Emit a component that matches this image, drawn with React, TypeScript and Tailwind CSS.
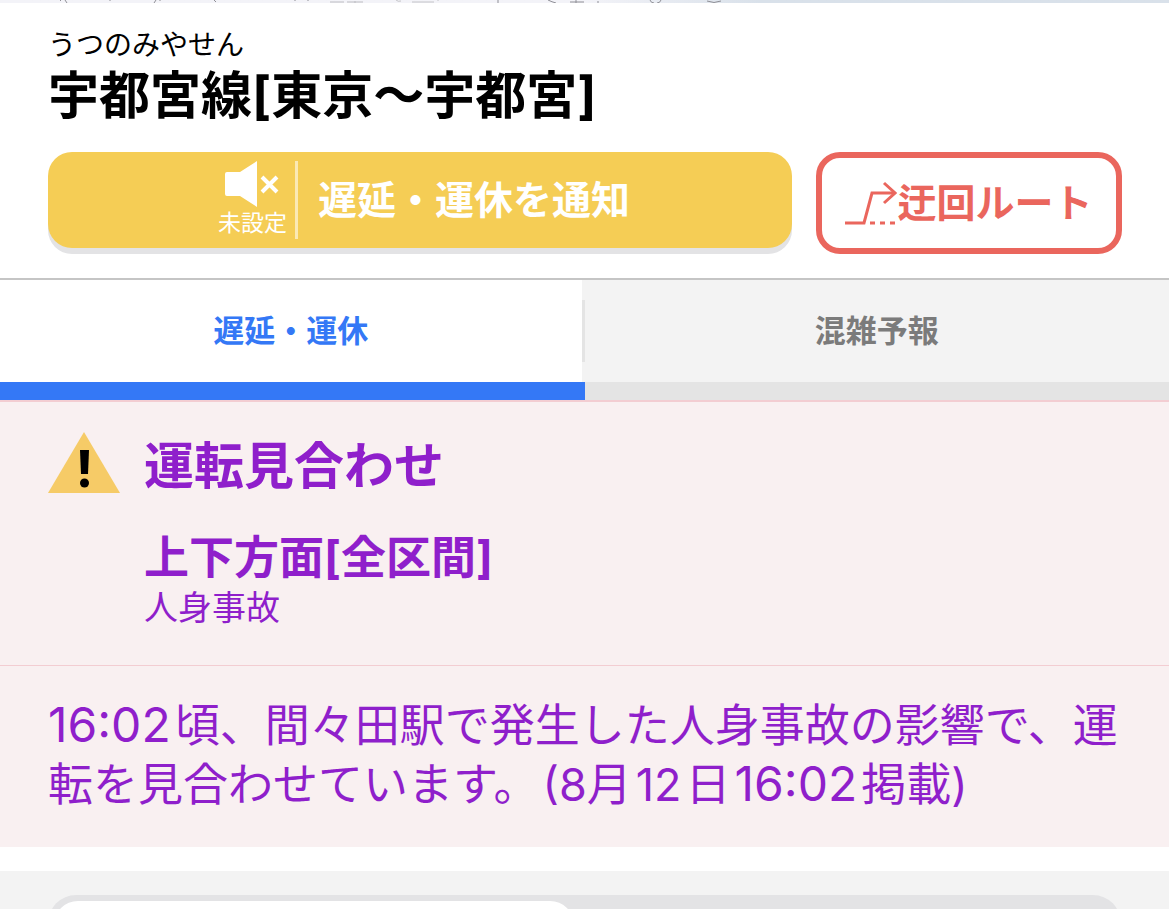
import React, { useState } from 'react'

const MapEdge: React.FC = () => (
  <div className="h-[3px] overflow-hidden bg-gradient-to-r from-[#f3f3f8] from-50% to-[#d9e1ea] to-65%">
    <svg width="760" height="3" viewBox="0 0 760 3" fill="none" stroke="#8f8f96" strokeWidth="1" aria-hidden="true">
      <path d="M60 0l1 1M110 0v1M160 0v1M65 0l2 3M154 3l2-3M214 0l2 2M295 0v1M308 0v1" />
      <path d="M330 2h14M347 2h16M355 1v2" stroke="#bdbdc2" />
      <path d="M396 0q2 2 5 1M412 2h22M438 0v1" stroke="#c4c4c8" />
      <path d="M498 0v3M548 0q4 2 8 3M570 2h14M576 0v3M598 1v2M650 0q1 3 4 3M661 0q-1 3-4 3M707 1q7 3 14 0" />
    </svg>
  </div>
)

const MuteIcon: React.FC = () => (
  <svg width="56" height="46" viewBox="0 0 56 46" aria-hidden="true">
    <path d="M3 11h13L33 0v46L16 35H3a2 2 0 0 1-2-2V13a2 2 0 0 1 2-2z" fill="#fff" />
    <path d="M38 16l15 15M53 16L38 31" stroke="#fff" strokeWidth="4" />
  </svg>
)

const DetourIcon: React.FC = () => (
  <svg width="52" height="44" viewBox="0 0 52 44" fill="none" stroke="#ea665d" strokeWidth="3" aria-hidden="true">
    <path d="M0 42h19L27 12h22" />
    <path d="M39 2l11 10-11 10" />
    <path d="M25 42h25" strokeDasharray="5 5" />
  </svg>
)

const WarningIcon: React.FC = () => (
  <svg width="72" height="62" viewBox="0 0 72 62" className="shrink-0" aria-hidden="true">
    <path d="M36 0l36 61H0z" fill="#f6cb67" />
    <path d="M32 18h9l-1 24h-7z" />
    <circle cx="36.5" cy="51" r="4.5" />
  </svg>
)

interface Tab {
  id: string
  label: string
}

const tabs: Tab[] = [
  { id: 'delay', label: '遅延・運休' },
  { id: 'crowd', label: '混雑予報' },
]

const App: React.FC = () => {
  const [selected, setSelected] = useState('delay')

  return (
    <div className="min-h-screen bg-[#f3f3f3] font-[Inter,'Noto_Sans_CJK_JP',sans-serif]" lang="ja">
      <MapEdge />

      <header className="bg-white pl-12 pr-[47px] pt-6 pb-6 border-b-2 border-[#c5c5c5]">
        <p className="text-[28px] leading-9 text-black">うつのみやせん</p>
        <h1 className="text-[51px] leading-[66px] font-bold text-black">宇都宮線[東京〜宇都宮]</h1>
        <div className="flex items-start gap-6 mt-[23px]">
          <button className="flex-1 h-24 flex items-center justify-center gap-5 pl-2 rounded-3xl bg-[#f5cd55] text-white shadow-[0_6px_0_#e3e3e5]">
            <span className="flex items-center pr-2 border-r-3 border-[#fbe9b4] h-[78px]">
              <span className="flex flex-col items-center">
                <MuteIcon />
                <span className="text-[23px] leading-8">未設定</span>
              </span>
            </span>
            <span className="text-[39px] leading-[56px] font-bold">遅延・運休を通知</span>
          </button>
          <button className="w-[306px] h-[102px] flex items-center justify-center rounded-3xl border-6 border-[#ea665d] bg-white text-[#ea665d]">
            <DetourIcon />
            <span className="text-[39px] leading-[56px] font-bold">迂回ルート</span>
          </button>
        </div>
      </header>

      <nav className="grid grid-cols-2">
        {tabs.map((tab) => (
          <button
            key={tab.id}
            onClick={() => setSelected(tab.id)}
            className={
              selected === tab.id
                ? 'h-30 flex items-center border-b-18 border-[#3478f6] bg-white text-[#3478f6]'
                : 'h-30 flex items-center border-b-18 border-[#e4e4e4] bg-[#f3f3f3] text-[#7b7b7b]'
            }
          >
            <span className="flex-1 text-[31px] leading-[44px] font-bold">{tab.label}</span>
            {tab.id === 'delay' && (
              <span className="flex items-center h-full bg-[#f3f3f3]">
                <span className="w-[3px] h-[62px] bg-[#e4e4e4]" />
              </span>
            )}
          </button>
        ))}
      </nav>

      <main className="bg-[#f9f0f1] text-[#8f1fcb]">
        <section className="border-t-2 border-b border-[#f3cdd2] px-12 pt-7 pb-[39px]">
          <div className="flex items-start gap-6">
            <span className="pt-0.5">
              <WarningIcon />
            </span>
            <h2 className="text-[50px] leading-[72px] font-bold">運転見合わせ</h2>
          </div>
          <div className="pl-24 mt-6">
            <h3 className="text-[45px] leading-[64px] font-bold">上下方面[全区間]</h3>
            <p className="text-[34px] leading-9">人身事故</p>
          </div>
        </section>
        <p className="pl-12 pr-10 pt-[30px] pb-[33px] text-[45px] leading-[58px]">
          <span className="text-[48px] mr-1">16:02</span>
          頃、間々田駅で発生した人身事故の影響で、運転を見合わせています。
          <span className="ml-1">(8月</span>
          <span className="mx-1">12</span>
          <span className="mr-1">日</span>
          <span className="text-[48px] mr-1">16:02</span>
          掲載)
        </p>
      </main>

      <div className="h-6 bg-white" />

      <div className="px-12 pt-6">
        <div className="h-20 rounded-[28px] bg-[#e3e3e5] p-1.5">
          <div className="w-[49%] h-full rounded-3xl bg-white" />
        </div>
      </div>
    </div>
  )
}

export default App
